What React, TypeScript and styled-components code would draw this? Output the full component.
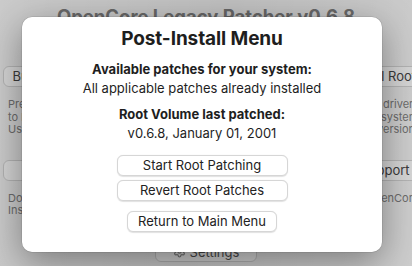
import React from "react";
import styled, { createGlobalStyle } from "styled-components";
import { Settings } from "lucide-react";

const GlobalStyle = createGlobalStyle`
  html, body {
    margin: 0;
    padding: 0;
    background: #c4c4c4;
    overflow: hidden;
  }
  body {
    font-family: Inter, "Noto Sans", "Liberation Sans", sans-serif;
    -webkit-font-smoothing: antialiased;
  }
`;

const Screen = styled.div`
  position: relative;
  width: 412px;
  height: 266px;
  overflow: hidden;
  background: #ececec;
`;

/* the main window, shown dimmed behind the sheet */
const Window = styled.div`
  display: flex;
  flex-direction: column;
  align-items: stretch;
  padding-top: 3px;
  color: #222;
`;

const WindowTitle = styled.h1`
  margin: 0;
  font-size: 18.5px;
  line-height: 26px;
  font-weight: 700;
  text-align: center;
  color: #7c7c7c;
`;

const MenuGrid = styled.div`
  display: grid;
  grid-template-columns: 182px 182px;
  column-gap: 109px;
  row-gap: 24px;
  padding: 37px 0 0 3px;
  width: 600px;
`;

const MenuItem = styled.div`
  display: flex;
  flex-direction: column;
`;

const MenuButton = styled.div`
  height: 21px;
  box-sizing: border-box;
  border: 1px solid #cfcfcf;
  border-radius: 6px;
  background: #f6f6f6;
  font-size: 13px;
  line-height: 19px;
  text-align: center;
  white-space: nowrap;
  color: #444;
`;

const MenuText = styled.div`
  margin-top: 11px;
  font-size: 11px;
  line-height: 12.5px;
  color: #7c7c7c;
  white-space: nowrap;
`;

const MenuLine = styled.div<{ $indent?: number }>`
  padding-left: ${({ $indent }) => $indent ?? 5}px;
`;

const Footer = styled.div`
  display: flex;
  justify-content: center;
  padding-top: 25px;
`;

const SettingsButton = styled.div`
  width: 102px;
  height: 20px;
  box-sizing: border-box;
  display: flex;
  align-items: center;
  justify-content: center;
  gap: 4px;
  border: 1px solid #cfcfcf;
  border-radius: 6px;
  background: #f6f6f6;
  font-size: 13px;
  color: #555;
`;

const Dim = styled.div`
  position: absolute;
  inset: 0;
  background: linear-gradient(
    100deg,
    rgba(0, 0, 0, 0.14) 0%,
    rgba(0, 0, 0, 0.19) 50%,
    rgba(0, 0, 0, 0.13) 100%
  );
`;

const Sheet = styled.div`
  position: absolute;
  left: 22px;
  top: 17px;
  width: 360px;
  box-sizing: border-box;
  padding: 11px 0 20px;
  display: flex;
  flex-direction: column;
  align-items: center;
  background: #fff;
  border-radius: 10px;
  box-shadow: 0 10px 36px rgba(0, 0, 0, 0.38), 0 0 0 0.5px rgba(0, 0, 0, 0.15);
  color: #1e1e1e;
`;

const SheetTitle = styled.h2`
  margin: 0 0 10px;
  font-size: 19px;
  line-height: 22px;
  font-weight: 700;
  letter-spacing: -0.1px;
`;

const Line = styled.div<{ $bold?: boolean; $gap?: number }>`
  font-size: 13px;
  line-height: 19px;
  font-weight: ${({ $bold }) => ($bold ? 700 : 400)};
  margin-top: ${({ $gap }) => $gap ?? 0}px;
`;

const Actions = styled.div`
  display: flex;
  flex-direction: column;
  align-items: center;
  margin-top: 12px;
`;

const SheetButton = styled.button<{ $width: number; $gap?: number }>`
  width: ${({ $width }) => $width}px;
  height: 21px;
  margin-top: ${({ $gap }) => $gap ?? 0}px;
  padding: 0;
  border: 1px solid #d6d6d6;
  border-radius: 6px;
  background: #fff;
  box-shadow: 0 0.5px 1px rgba(0, 0, 0, 0.12);
  font-family: inherit;
  font-size: 13px;
  line-height: 19px;
  color: #222;
`;

export default function App() {
  return (
    <Screen>
      <GlobalStyle />
      <Window>
        <WindowTitle>OpenCore Legacy Patcher v0.6.8</WindowTitle>
        <MenuGrid>
          <MenuItem>
            <MenuButton>Build and Install OpenCore</MenuButton>
            <MenuText>
              <MenuLine>Prepare and install OpenCore</MenuLine>
              <MenuLine>to boot unsupported Macs.</MenuLine>
              <MenuLine>Use on this machine or others.</MenuLine>
            </MenuText>
          </MenuItem>
          <MenuItem>
            <MenuButton>Post-Install Root Patch</MenuButton>
            <MenuText>
              <MenuLine $indent={89}>drivers for</MenuLine>
              <MenuLine $indent={87}>system on</MenuLine>
              <MenuLine $indent={83}>version</MenuLine>
            </MenuText>
          </MenuItem>
          <MenuItem>
            <MenuButton>Create macOS Installer</MenuButton>
            <MenuText>
              <MenuLine>Download and flash macOS</MenuLine>
              <MenuLine>Installers for your Mac.</MenuLine>
            </MenuText>
          </MenuItem>
          <MenuItem>
            <MenuButton>Support</MenuButton>
            <MenuText>
              <MenuLine $indent={72}>OpenCore</MenuLine>
            </MenuText>
          </MenuItem>
        </MenuGrid>
        <Footer>
          <SettingsButton>
            <Settings size={13} color="#8a8a8a" strokeWidth={2.4} />
            Settings
          </SettingsButton>
        </Footer>
      </Window>
      <Dim />
      <Sheet>
        <SheetTitle>Post-Install Menu</SheetTitle>
        <Line $bold>Available patches for your system:</Line>
        <Line>All applicable patches already installed</Line>
        <Line $bold $gap={7}>Root Volume last patched:</Line>
        <Line>v0.6.8, January 01, 2001</Line>
        <Actions>
          <SheetButton $width={171}>Start Root Patching</SheetButton>
          <SheetButton $width={171} $gap={4}>Revert Root Patches</SheetButton>
          <SheetButton $width={150} $gap={10}>Return to Main Menu</SheetButton>
        </Actions>
      </Sheet>
    </Screen>
  );
}
